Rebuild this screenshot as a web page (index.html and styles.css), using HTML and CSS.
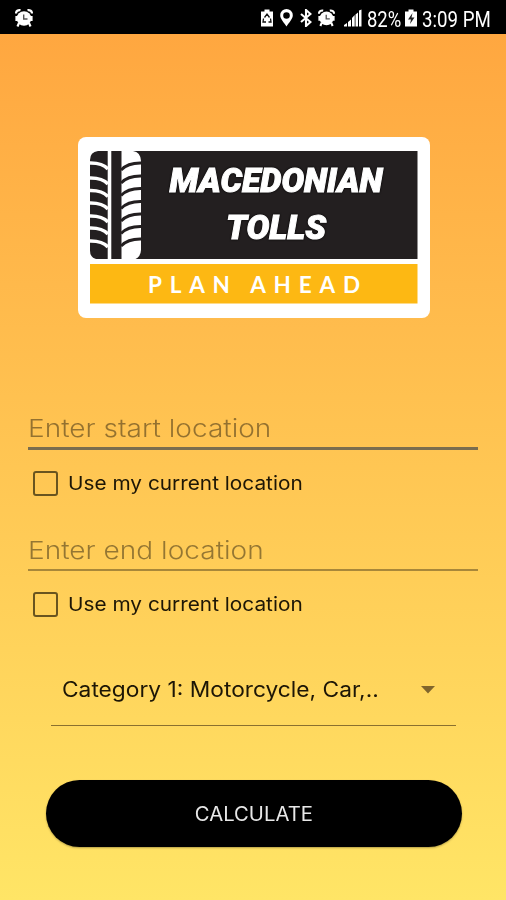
FILE: index.html
```html
<!DOCTYPE html>
<html lang="en">
<head>
    <meta charset="utf-8">
    <title>Macedonian Tolls</title>
    <link rel="stylesheet" href="styles.css">
</head>
<body>
    <svg class="defs" width="0" height="0">
        <symbol id="alarm" viewBox="0 0 18 18">
            <circle cx="9" cy="9.5" r="7.3" fill="#fff"/>
            <path d="M1 4.5 C1 2 3 .8 5.5 1.2 M17 4.5 C17 2 15 .8 12.5 1.2" stroke="#fff" stroke-width="2.2" fill="none"/>
            <path d="M1.500 7v5M16.500 7v5M4 14l-1.500 3.500M14 14l1.500 3.500" stroke="#fff" stroke-width="2.2"/>
            <path d="M8.7 5.5V10h3.8" stroke="#555" stroke-width="1.4" fill="none"/>
        </symbol>
    </svg>

    <div class="status-bar">
        <svg class="alarm" width="18" height="18"><use href="#alarm"/></svg>
        <div class="status-right">
            <svg class="saver" width="12" height="18" viewBox="0 0 12 18">
                <path d="M0 2.5h3.5V.5h5v2H12V17.500H0z" fill="#fff"/>
                <path d="M3.5 8.500 6 5l2.500 3.500M9.500 9.500l.5 3.500H7.500M2.500 9.500 2 13h3" stroke="#111" stroke-width="1.300" fill="none"/>
            </svg>
            <svg class="pin" width="13" height="18" viewBox="0 0 13 18">
                <path d="M6.500 0A6.300 6.300 0 0 0 .2 6.300C.2 10 4 13.500 6.500 17.500 9 13.500 12.800 10 12.800 6.300A6.300 6.300 0 0 0 6.500 0zm0 3.200a3.300 3.300 0 1 1 0 6.600 3.300 3.300 0 0 1 0-6.600z" fill="#fff"/>
            </svg>
            <svg class="bluetooth" width="12" height="18" viewBox="0 0 12 18">
                <path d="M1 5l9.500 8-4.500 4V1l4.500 4L1 13" stroke="#fff" stroke-width="2.100" fill="none"/>
            </svg>
            <svg class="alarm-small" width="17" height="18"><use href="#alarm"/></svg>
            <svg class="signal" width="18" height="18" viewBox="0 0 18 18">
                <path d="M0 17.500v-1.500l3-2v3.500zM4 17.500V13l3-2.500v7zM8 17.500V9l2.700-3v11.500zM11.500 17.500V5.500L14 3.500v14zM15 17.500V1.500l2.500-1v17z" fill="#fff"/>
            </svg>
            <span class="status-text percent">82%</span>
            <svg class="battery" width="12" height="18" viewBox="0 0 12 18">
                <path d="M0 2.500h3.500V.5h5v2H12V17.500H0z" fill="#fff"/>
                <path d="M7.500 4 3 10.500h3L5 15l4.500-6.500h-3z" fill="#222"/>
            </svg>
            <span class="status-text clock">3:09 PM</span>
        </div>
    </div>

    <div class="container">
        <svg class="logo" width="352" height="181" viewBox="0 0 352 181">
            <rect width="352" height="181" rx="8" fill="#fff"/>
            <rect x="12" y="14" width="327.500" height="108" fill="#231f20"/>
            <path d="M12 14h8q-8 1-8 9zM12 122.500v-9q0 8 8 9z" fill="#fff"/>
            <!-- left tread -->
            <path d="M31.500 14V122.500" stroke="#fff" stroke-width="3.600"/>
            <g fill="none" stroke="#fff" stroke-width="3.600">
                <path d="M11 26q13-.5 19 6M11 41q13-.5 19 6M11 53.500q13-.5 19 6M11 66q13-.5 19 6M11 79q13-.5 19 6M11 91q13-.5 19 6M11 104q13-.5 19 6"/>
            </g>
            <!-- right tread -->
            <path d="M43.500 14H55Q62.500 15 63 24V113Q62.500 121.500 55 122.500H43.500z" fill="#fff"/>
            <g fill="none" stroke="#231f20" stroke-width="2.900">
                <path d="M43 33q7-7.500 21-7M43 46q7-7.500 21-7M43 58.500q7-7.500 21-7M43 71.500q7-7.500 21-7M43 84q7-7.500 21-7M43 96.500q7-7.500 21-7M43 109q7-7.500 21-7"/>
            </g>
            <g class="logo-title">
                <text x="91.500" y="55" textLength="213" lengthAdjust="spacingAndGlyphs">MACEDONIAN</text>
                <text x="148" y="101.500" textLength="100" lengthAdjust="spacingAndGlyphs">TOLLS</text>
            </g>
            <rect x="12" y="127" width="327.500" height="39.500" fill="#fdb813"/>
            <text class="logo-tagline" x="70" y="155.500" textLength="212">PLAN AHEAD</text>
        </svg>

        <form>
            <div class="field focused">
                <input type="text" placeholder="Enter start location">
            </div>
            <label class="check">
                <input type="checkbox">
                <span>Use my current location</span>
            </label>

            <div class="field">
                <input type="text" placeholder="Enter end location">
            </div>
            <label class="check">
                <input type="checkbox">
                <span>Use my current location</span>
            </label>

            <div class="category">
                <span>Category 1: Motorcycle, Car,..</span>
                <svg width="14" height="8" viewBox="0 0 14 8"><path d="M0 0h14L7 7.500z" fill="#80652c"/></svg>
            </div>

            <button type="button"><span>CALCULATE</span></button>
        </form>
    </div>
</body>
</html>
```

FILE: styles.css
```css
* {
    box-sizing: border-box;
}

body {
    margin: 0;
    height: 900px;
    overflow: hidden;
    background: linear-gradient(#ffa740 34px, #ffe566 900px);
    font-family: Inter, "Open Sans", sans-serif;
}

.defs {
    display: none;
}

.status-bar {
    display: flex;
    justify-content: space-between;
    height: 34px;
    padding: 9px 15px 0;
    background: #000;
    color: #fff;
}

.status-right {
    display: flex;
}

.pin {
    margin-left: 7px;
}

.bluetooth {
    margin-left: 7px;
}

.alarm-small {
    margin-left: 6px;
}

.signal {
    margin-left: 9px;
}

.status-text {
    font-family: Roboto, sans-serif;
    font-size: 22.5px;
    line-height: 20px;
    white-space: nowrap;
    transform-origin: left;
}

.percent {
    width: 35px;
    margin-left: 5px;
    transform: scaleX(0.82);
}

.battery {
    margin-left: 3px;
}

.clock {
    width: 69px;
    margin-left: 5px;
    transform: scaleX(0.83);
}

.container {
    padding: 103px 28px 0;
}

.logo {
    display: block;
    margin-left: 50px;
}

.logo-title {
    font-family: Roboto, sans-serif;
    font-size: 34px;
    font-weight: 900;
    font-style: italic;
    fill: #fff;
    stroke: #fff;
    stroke-width: 1px;
    filter: drop-shadow(0 0 1px #000);
}

.logo-tagline {
    font-family: Lato, sans-serif;
    font-size: 22.5px;
    font-weight: 700;
    fill: #fff;
}

form {
    padding-top: 88px;
}

.field {
    height: 43px;
    border-bottom: 2px solid rgba(0, 0, 0, 0.34);
}

.field.focused {
    height: 44px;
    border-bottom: 3px solid #7a6d4e;
}

.field input {
    display: block;
    width: 380px;
    height: 42px;
    padding: 2px 0 0;
    border: none;
    outline: none;
    background: none;
    font-family: inherit;
    font-size: 24.5px;
    font-weight: 300;
    transform: scaleX(1.145);
    transform-origin: left;
}

.field input::placeholder {
    color: rgba(0, 0, 0, 0.42);
}

.check {
    display: flex;
    align-items: center;
    height: 66px;
    margin-bottom: 12px;
    padding-left: 5px;
}

.check input {
    appearance: none;
    width: 25px;
    height: 25px;
    margin: 0 10px 0 0;
    border: 2px solid #69541f;
    border-radius: 3px;
}

.check span {
    font-size: 19px;
    color: #1d1606;
    transform: scaleX(1.095);
    transform-origin: left;
    white-space: nowrap;
}

.category {
    display: flex;
    align-items: center;
    justify-content: space-between;
    height: 72px;
    margin: 17px 22px 0 23px;
    padding: 0 21px 0 11px;
    border-bottom: 1.5px solid #8a702f;
}

.category span {
    font-size: 21px;
    color: #1d1606;
    transform: scaleX(1.083);
    transform-origin: left;
    white-space: nowrap;
}

button {
    display: block;
    width: 416px;
    height: 67px;
    margin: 54px 0 0 18px;
    border: none;
    border-radius: 34px;
    background: #000;
    color: #e8e8e8;
    font-family: inherit;
    font-size: 19.5px;
    box-shadow: 0 1px 2px rgba(0, 0, 0, 0.3);
}

button span {
    display: inline-block;
    transform: scaleX(1.04);
}
```
